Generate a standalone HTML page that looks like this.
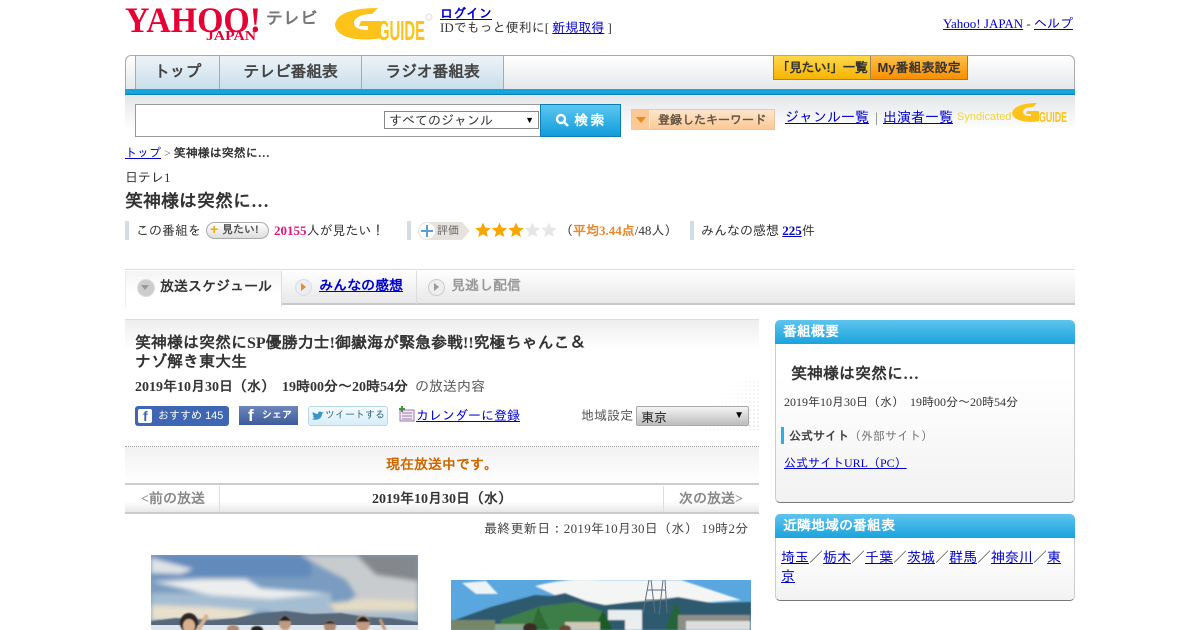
<!DOCTYPE html>
<html lang="ja"><head><meta charset="utf-8"><title>笑神様は突然に…</title>
<style>
html,body{margin:0;padding:0;background:#fff}
body{width:1200px;height:630px;overflow:hidden;position:relative;font-family:"Liberation Serif","IPAGothic",serif;font-size:14px;color:#333}
.a{position:absolute;white-space:nowrap}
a{color:#00c}
.g{font-family:"Liberation Sans","IPAGothic",sans-serif;color:#333}
.bar{position:absolute;width:4px;background:#cfdde9}
.hd{position:absolute;left:775px;width:300px;height:24px;border-radius:5px 5px 0 0;background:linear-gradient(#5ec4ee,#1aa3dc);color:#fff;font-weight:bold;font-size:14px;line-height:25px;text-indent:8px}
.bx{position:absolute;left:775px;width:298px;border:1px solid #ccc;border-top:0;border-bottom:1px solid #777;border-radius:0 0 5px 5px;background:linear-gradient(#fff 20%,#f2f2f2)}
.t{background:linear-gradient(#edf3f7,#c9dfec);border-right:1px solid #aaa;text-align:center;font-size:16px;line-height:34px;font-weight:bold;color:#444;height:33px;top:56px;letter-spacing:-.3px}
</style></head><body>

<!-- logo -->
<svg class="a" style="left:125px;top:3px" width="138" height="40" viewBox="0 0 138 40">
<text x="0" y="29" font-family="Liberation Serif" font-weight="bold" font-size="36" fill="#e60033" textLength="136" lengthAdjust="spacingAndGlyphs">YAHOO!</text>
<text x="81" y="37" font-family="Liberation Serif" font-weight="bold" font-size="14" fill="#e60033" textLength="50" lengthAdjust="spacingAndGlyphs">JAPAN</text>
</svg>
<div class="a g" style="left:266px;top:9px;font-size:17px;line-height:20px;font-weight:bold;color:#777">テレビ</div>
<svg class="a" style="left:334px;top:6px" width="100" height="36" viewBox="0 0 100 36">
<path d="M1 19C2 8 17 2 44 2L38 8C27 8 20 12 20 17C20 22 26 24 34 24V20L25 20L27 15H47V32C34 35 3 35 1 19Z" fill="#fdc31a"/>
<text x="44" y="34" font-family="Liberation Sans" font-size="28" font-weight="bold" fill="#fdc31a" textLength="47" lengthAdjust="spacingAndGlyphs">GUIDE</text>
<circle cx="95" cy="11" r="3" fill="none" stroke="#ddd"/>
</svg>
<div class="a" style="left:440px;top:7px;font-size:13px;line-height:14px"><a href="#" style="font-weight:bold">ログイン</a><br>IDでもっと便利に[ <a href="#">新規取得</a> ]</div>
<div class="a" style="right:127px;top:16px;font-size:13px;line-height:16px;color:#333"><a href="#">Yahoo! JAPAN</a> - <a href="#">ヘルプ</a></div>

<!-- nav -->
<div class="a" style="left:125px;top:55px;width:948px;height:34px;border:1px solid #aaa;border-bottom:0;border-radius:6px 6px 0 0;background:linear-gradient(#fff,#e4e8ea)"></div>
<div class="a" style="left:125px;top:89px;width:950px;height:6px;background:#14a5df;border-bottom:1px solid #0b7fb2;box-sizing:border-box"></div>
<div class="a g t" style="left:135px;width:83px;border-left:1px solid #aaa">トップ</div>
<div class="a g t" style="left:220px;width:141px">テレビ番組表</div>
<div class="a g t" style="left:362px;width:141px">ラジオ番組表</div>
<div class="a g" style="left:773px;top:56px;width:96px;height:23px;border:1px solid #9a8a50;border-width:0 1px 1px 1px;background:linear-gradient(#fed84a,#f7b400);text-align:center;font-size:13px;line-height:23px;font-weight:bold;color:#333;letter-spacing:-.6px">「見たい!」一覧</div>
<div class="a g" style="left:871px;top:56px;width:96px;height:23px;border:1px solid #9a7a50;border-width:0 1px 1px 0;background:linear-gradient(#fec04a,#f98e00);text-align:center;font-size:13px;line-height:23px;font-weight:bold;color:#333">My番組表設定</div>

<!-- search -->
<div class="a" style="left:125px;top:95px;width:950px;height:35px;background:linear-gradient(#e3e6e8,#fff)"></div>
<div class="a" style="left:135px;top:104px;width:404px;height:31px;border:1px solid #999;background:#fff"></div>
<div class="a g" style="left:384px;top:111px;width:153px;height:16px;border:1px solid #888;background:#fff;font-size:13px;line-height:18px;text-indent:4px;color:#333">すべてのジャンル<span style="position:absolute;right:4px;top:-1px;font-size:9px;color:#000">▼</span></div>
<div class="a g" style="left:540px;top:104px;width:79px;height:31px;border:1px solid #0b7fb2;background:linear-gradient(#5cc6f0,#109ddb);color:#fff;font-weight:bold;text-align:center;font-size:14px;line-height:31px;letter-spacing:2px">
<svg width="14" height="14" viewBox="0 0 14 14" style="vertical-align:-2px"><circle cx="6" cy="6" r="4" fill="none" stroke="#fff" stroke-width="2.4"/><path d="M9 9l4 4" stroke="#fff" stroke-width="2.6"/></svg> 検索</div>
<div class="a g" style="left:631px;top:109px;width:142px;height:19px;border:1px solid #e8c8a0;background:linear-gradient(#fde6cc,#fbc995);font-size:12px;line-height:20px;color:#654;font-weight:bold;text-indent:26px"><span style="position:absolute;left:0;top:0;width:17px;height:19px;background:#fbc995;border-right:1px solid #eee"></span><span style="position:absolute;left:4px;top:7px;border:5px solid transparent;border-top:6px solid #e88a20;border-bottom:0"></span>登録したキーワード</div>
<a class="a" href="#" style="left:785px;top:110px;line-height:17px">ジャンル一覧</a>
<div class="a" style="left:875px;top:110px;line-height:17px;color:#777">|</div>
<a class="a" href="#" style="left:883px;top:110px;line-height:17px">出演者一覧</a>
<div class="a g" style="left:957px;top:111px;font-size:11px;line-height:13px;color:#f1d33c">Syndicated</div>
<svg class="a" style="left:1012px;top:102px" width="56" height="22" viewBox="0 0 56 22"><path d="M0 11C1 5 10 1 25 1L21 5C14 5 11 7 11 10C11 13 15 14 19 14V12L14 12L15 9H27V19C19 21 1 20 0 11Z" fill="#fdc31a"/><text x="27" y="20" font-family="Liberation Sans" font-size="15" font-weight="bold" fill="#fdc31a" textLength="28" lengthAdjust="spacingAndGlyphs">GUIDE</text></svg>

<!-- breadcrumb / title -->
<div class="a" style="left:125px;top:145px;font-size:12px;line-height:16px;color:#666"><a href="#">トップ</a> &gt; <b style="color:#333">笑神様は突然に…</b></div>
<div class="a" style="left:125px;top:169px;font-size:13px;line-height:18px">日テレ1</div>
<div class="a" style="left:125px;top:189px;font-size:18px;line-height:24px;font-weight:bold">笑神様は突然に…</div>

<!-- rating row -->
<div class="bar" style="left:125px;top:221px;height:19px"></div>
<div class="a" style="left:136px;top:222px;font-size:13px;line-height:18px">この番組を</div>
<div class="a g" style="left:206px;top:222px;width:61px;height:15px;border:1px solid #aaa;border-radius:9px;background:linear-gradient(#fff,#ddd);font-size:11px;line-height:15px;font-weight:bold;color:#555;text-indent:15px"><span style="position:absolute;left:3px;top:-1px;color:#f0a800;text-indent:0;font-size:14px">+</span>見たい!</div>
<div class="a" style="left:274px;top:222px;font-size:13px;line-height:18px"><b style="color:#e0157f">20155</b>人が見たい！</div>
<div class="bar" style="left:407px;top:221px;height:19px"></div>
<div class="a g" style="left:418px;top:222px;width:44px;height:18px;border-radius:9px 0 0 9px;background:#e6e3de;font-size:11px;line-height:18px;color:#666;text-indent:19px"><span style="position:absolute;left:1px;top:1px;width:16px;height:16px;border-radius:8px;background:#fff;text-indent:0"><svg width="16" height="16" viewBox="0 0 16 16" style="display:block"><path d="M8 2v12M2 8h12" stroke="#5a9fd0" stroke-width="2"/></svg></span>評価<span style="position:absolute;left:44px;top:0;border:9px solid transparent;border-left:8px solid #e6e3de;border-right:0"></span></div>
<svg class="a" style="left:475px;top:222px" width="82" height="16" viewBox="0 0 82 16">
<defs><path id="s" d="M8 0.5L10.2 5.6 15.7 6.1 11.5 9.7 12.8 15 8 12.2 3.2 15 4.5 9.7 0.3 6.1 5.8 5.6Z"/></defs>
<use href="#s" fill="#f7a600"/><use href="#s" x="16.5" fill="#f7a600"/><use href="#s" x="33" fill="#f7a600"/><use href="#s" x="49.5" fill="#e6e6e6"/><use href="#s" x="66" fill="#e6e6e6"/></svg>
<div class="a" style="left:560px;top:222px;font-size:13px;line-height:18px">（<b style="color:#e58a2e">平均3.44点</b>/48人）</div>
<div class="bar" style="left:690px;top:221px;height:19px"></div>
<div class="a" style="left:701px;top:222px;font-size:13px;line-height:18px">みんなの感想 <a href="#" style="font-weight:bold">225</a>件</div>

<!-- tabs -->
<div class="a" style="left:125px;top:269px;width:950px;height:36px;box-sizing:border-box;border-top:1px solid #ddd;border-bottom:2px solid #c8c8c8;background:linear-gradient(#fff,#e8e8e8)"></div>
<div class="a" style="left:125px;top:271px;width:155px;height:36px;border-right:1px solid #ddd;border-left:1px solid #eee;background:linear-gradient(#f4f4f4,#fff 60%)"></div>
<div class="a" style="left:137px;top:279px;width:16px;height:16px;border-radius:9px;background:#ccc;border:1px solid #ddd"></div>
<div class="a" style="left:141px;top:285px;border:4px solid transparent;border-top:5px solid #999;border-bottom:0"></div>
<div class="a" style="left:160px;top:279px;font-size:14px;line-height:18px;font-weight:bold">放送スケジュール</div>
<div class="a" style="left:295px;top:279px;width:15px;height:15px;border-radius:9px;background:#e8eef3;border:1px solid #ddd"></div>
<div class="a" style="left:301px;top:283px;border:4px solid transparent;border-left:5px solid #e58a2e;border-right:0"></div>
<a class="a" href="#" style="left:319px;top:278px;font-size:14px;line-height:18px;font-weight:bold">みんなの感想</a>
<div class="a" style="left:416px;top:271px;width:1px;height:33px;background:#ddd"></div>
<div class="a" style="left:428px;top:279px;width:15px;height:15px;border-radius:9px;background:#eee;border:1px solid #ccc"></div>
<div class="a" style="left:434px;top:283px;border:4px solid transparent;border-left:5px solid #999;border-right:0"></div>
<div class="a" style="left:451px;top:278px;font-size:14px;line-height:18px;font-weight:bold;color:#999">見逃し配信</div>

<!-- main block -->
<div class="a" style="left:125px;top:319px;width:634px;height:30px;border-top:1px solid #ddd;background:linear-gradient(#eee,#fff)"></div>
<div class="a" style="left:135px;top:334px;font-size:16px;line-height:19px;font-weight:bold">笑神様は突然にSP優勝力士!御嶽海が緊急参戦!!究極ちゃんこ＆<br>ナゾ解き東大生</div>
<div class="a" style="left:135px;top:379px;font-size:14px;line-height:18px"><b>2019年10月30日（水）&nbsp; 19時00分～20時54分</b>&nbsp; <span style="color:#555">の放送内容</span></div>
<div class="a" style="left:680px;top:380px;width:79px;height:50px;background-image:radial-gradient(#e4e4e4 1px,transparent 1px);background-size:4px 4px;-webkit-mask-image:linear-gradient(135deg,transparent 40%,#000)"></div>

<div class="a g" style="left:135px;top:406px;width:94px;height:20px;border-radius:3px;background:#3f66b3;color:#fff;font-size:11px;line-height:20px;text-indent:23px">おすすめ <span style="font-size:11px">145</span><span style="position:absolute;left:3px;top:3px;width:14px;height:14px;background:#fff;border-radius:2px;color:#3f66b3;font:bold 14px/15px 'Liberation Sans';text-indent:5px">f</span></div>
<div class="a g" style="left:239px;top:406px;width:59px;height:19px;background:linear-gradient(#6d86bb,#3e5c9a);color:#fff;font-size:10px;line-height:19px;text-indent:23px;font-weight:bold">シェア<span style="position:absolute;left:9px;top:0;font:bold 17px/20px 'Liberation Sans';text-indent:0">f</span></div>
<div class="a g" style="left:308px;top:406px;width:78px;height:18px;border:1px solid #b8d8e8;border-radius:3px;background:linear-gradient(#f4fbff,#d6edf8);color:#37657f;font-size:10px;line-height:18px;text-indent:16px"><svg style="position:absolute;left:3px;top:4px" width="12" height="10" viewBox="0 0 12 10"><path d="M0 8C4 10 10 8 10 3L12 1 10 1.500C9 0 6 0 6 3 4 3 2 2 1 1 0 3 1 4 2 5L1 5C1 6 2 7 3 7Z" fill="#3a94c8"/></svg>ツイートする</div>
<svg class="a" style="left:399px;top:406px" width="16" height="16" viewBox="0 0 16 16"><rect x="1" y="4" width="14" height="11" fill="#eee" stroke="#a070b0"/><path d="M3 7h10M3 10h10M3 13h10" stroke="#a070b0"/><path d="M3 0v6M0 3h6" stroke="#3a9a3a" stroke-width="2"/></svg>
<a class="a" href="#" style="left:416px;top:407px;font-size:13px;line-height:18px">カレンダーに登録</a>
<div class="a" style="left:581px;top:407px;font-size:13px;line-height:18px;color:#555">地域設定</div>
<div class="a" style="left:636px;top:406px;width:111px;height:18px;border:1px solid #aaa;border-radius:2px;background:linear-gradient(#f4f4f4,#bbb);font-size:13px;line-height:21px;text-indent:4px;color:#222">東京<span style="position:absolute;right:4px;top:-2px;font-size:10px;color:#000">▼</span></div>

<div class="a" style="left:125px;top:446px;width:634px;height:37px;border-top:1px dotted #999;background:linear-gradient(#f2f2f2,#fff)"></div>
<div class="a" style="left:125px;top:457px;width:634px;text-align:center;font-size:14px;line-height:17px;font-weight:bold;color:#c60">現在放送中です。</div>
<div class="a" style="left:125px;top:483px;width:634px;height:31px;box-sizing:border-box;border-top:2px solid #ccc;border-bottom:2px solid #ccc;background:linear-gradient(#fff 60%,#e8e8e8)"></div>
<div class="a" style="left:219px;top:486px;width:1px;height:26px;background:#ddd"></div>
<div class="a" style="left:663px;top:486px;width:1px;height:26px;background:#ddd"></div>
<div class="a" style="left:141px;top:491px;font-size:14px;line-height:18px;font-weight:bold;color:#888">&lt;前の放送</div>
<div class="a" style="left:372px;top:491px;font-size:14px;line-height:18px;font-weight:bold">2019年10月30日（水）</div>
<div class="a" style="left:679px;top:491px;font-size:14px;line-height:18px;font-weight:bold;color:#888">次の放送&gt;</div>
<div class="a" style="left:484px;top:520px;font-size:13px;line-height:17px;letter-spacing:.3px;color:#444">最終更新日：2019年10月30日（水） 19時2分</div>

<!-- photos -->
<svg class="a" style="left:151px;top:555px" width="267" height="75" viewBox="0 0 267 75">
<defs><filter id="b" x="-20%" y="-20%" width="140%" height="140%"><feGaussianBlur stdDeviation="2.500"/></filter><filter id="c"><feGaussianBlur stdDeviation=".7"/></filter></defs>
<rect width="267" height="75" fill="#7a9cc0"/>
<g filter="url(#b)">
<rect y="0" width="160" height="22" fill="#628abb"/>
<rect y="38" width="180" height="18" fill="#a5bdd2"/>
<path d="M150 0H267V60H180L205 40 195 25 170 12Z" fill="#c9ccce"/>
<path d="M205 0H267V26L225 20Z" fill="#84888c"/>
<path d="M0 3L42 14 30 19 0 18Z" fill="#dfe3e6"/>
<path d="M2 27L50 24 95 24 110 33 176 38 120 44 60 40Z" fill="#eceeee"/>
<path d="M0 50L60 52 105 56 90 66H0Z" fill="#e8e0cc"/>
<path d="M178 48L215 44 267 46V60H185Z" fill="#e4dcc4"/>
<path d="M120 56H267V68H120Z" fill="#a9bccb"/>
</g>
<path d="M0 66L25 63 60 65 85 63 110 58 135 56 160 59 190 58 215 62 240 63 267 67V71H0Z" fill="#56687a" filter="url(#c)"/>
<rect y="70" width="267" height="5" fill="#dfe5e8"/>
<g filter="url(#c)">
<ellipse cx="38" cy="68" rx="9" ry="10" fill="#2f2723"/><ellipse cx="38" cy="71" rx="6" ry="7" fill="#d8b090"/><path d="M47 76L56 60" stroke="#d8b090" stroke-width="4"/>
<ellipse cx="82" cy="74" rx="6" ry="4" fill="#b08a75"/><ellipse cx="106" cy="75" rx="6" ry="4" fill="#222"/>
<ellipse cx="134" cy="68" rx="6" ry="7" fill="#c29a80"/><path d="M128 66Q134 56 140 66Z" fill="#222"/>
<ellipse cx="179" cy="71" rx="6" ry="6" fill="#b08a75"/><path d="M173 69Q179 62 185 69Z" fill="#333"/>
<ellipse cx="212" cy="68" rx="7" ry="8" fill="#c29a80"/><path d="M205 67Q212 56 219 67Z" fill="#222"/>
<path d="M234 75L229 64" stroke="#c29a80" stroke-width="3"/></g>
</svg>
<svg class="a" style="left:451px;top:580px" width="300" height="50" viewBox="0 0 300 50">
<rect width="300" height="50" fill="#5aa6de"/>
<g filter="url(#c)">
<path d="M11 3L35 1 47 14 25 14Z" fill="#eef3f6"/>
<path d="M84 6Q120 -3 150 0H230L290 20 230 24 150 26 110 18Z" fill="#f4f6f6"/>
<path d="M4 40L40 27 84 15 100 16 114 13 135 21 154 25 180 22 205 20 227 17 261 23 300 22V50H0Z" fill="#2f5a70"/>
<path d="M50 40L90 26 125 22 154 32 150 50H50Z" fill="#3c7d46"/>
<rect x="157" y="30" width="34" height="10" fill="#e8eef0"/><rect x="174" y="40" width="17" height="10" fill="#eee"/>
<path d="M80 50L87 27 98 50Z" fill="#2e6a30"/><path d="M143 50L152 30 162 50Z" fill="#1f5a28"/><path d="M214 50L224 22 240 50Z" fill="#27643a"/>
<rect y="40" width="44" height="10" fill="#768668"/><rect x="44" y="44" width="30" height="6" fill="#8da58c"/>
<rect x="227" y="35" width="72" height="15" fill="#8e8e88"/><rect x="235" y="41" width="64" height="9" fill="#ddd"/>
<rect x="114" y="42" width="35" height="8" fill="#cfc8b8"/>
<ellipse cx="79" cy="48" rx="7" ry="5" fill="#3a2c28"/><ellipse cx="114" cy="49" rx="6" ry="4" fill="#6a4a3a"/>
</g>
<path d="M198 0L192 33M214 0L216 33M200 0L204 33M212 0L208 35M194 20L216 20M196 10L214 10" stroke="#5f6f7c" stroke-width="1" fill="none"/>
</svg>

<!-- sidebar -->
<div class="hd" style="top:320px">番組概要</div>
<div class="bx" style="top:344px;height:158px"></div>
<div class="a" style="left:791px;top:364px;font-size:16px;line-height:21px;font-weight:bold">笑神様は突然に…</div>
<div class="a" style="left:784px;top:394px;font-size:12px;line-height:16px">2019年10月30日（水）&nbsp; 19時00分～20時54分</div>
<div class="a" style="left:781px;top:427px;width:3px;height:17px;background:#2cb0e0"></div>
<div class="a" style="left:789px;top:428px;font-size:12px;line-height:16px;color:#777"><b style="color:#444">公式サイト</b>（外部サイト）</div>
<a class="a" href="#" style="left:784px;top:455px;font-size:12px;line-height:16px">公式サイトURL（PC）</a>
<div class="hd" style="top:514px">近隣地域の番組表</div>
<div class="bx" style="top:538px;height:62px"></div>
<div class="a" style="left:781px;top:549px;width:285px;white-space:normal;line-height:19px;color:#333"><a href="#">埼玉</a>／<a href="#">栃木</a>／<a href="#">千葉</a>／<a href="#">茨城</a>／<a href="#">群馬</a>／<a href="#">神奈川</a>／<a href="#">東京</a></div>

</body></html>
